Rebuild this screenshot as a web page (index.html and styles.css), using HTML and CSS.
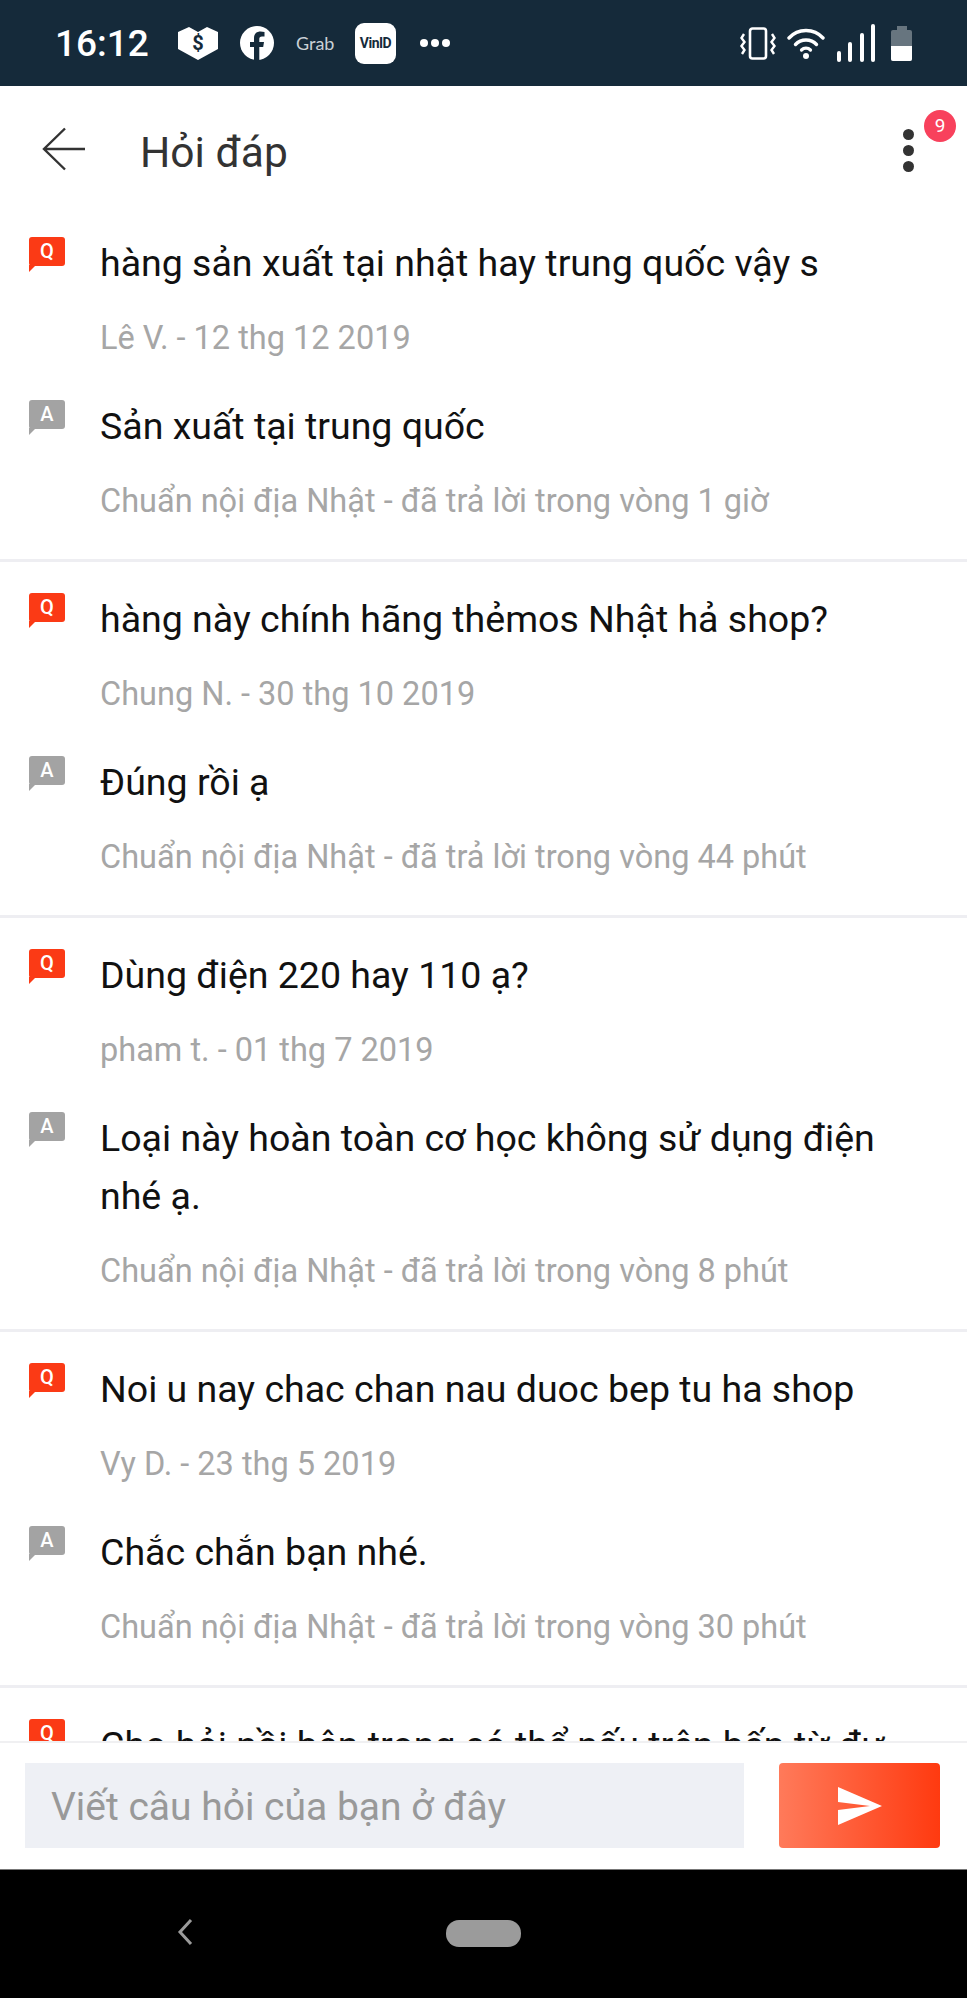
FILE: index.html
```html
<!DOCTYPE html>
<html lang="vi">
<head>
    <meta charset="UTF-8">
    <meta name="viewport" content="width=device-width, initial-scale=1.0">
    <title>Hỏi đáp</title>
    <link rel="stylesheet" href="styles.css">
</head>
<body>
    <div class="status-bar">
        <div class="status-left">
            <span class="clock">16:12</span>
            <svg class="ic-shield" viewBox="0 0 40 33"><path d="M0 5 L11 0 L20 5 L29 0 L40 5 V22 L20 33 L0 22Z" fill="#fff"/><text x="20" y="23" text-anchor="middle" class="ic-dollar">$</text></svg>
            <svg class="ic-fb" viewBox="0 0 34 34"><circle cx="17" cy="17" r="17" fill="#fff"/><path d="M14 34 V21 H10 V16 H14 V12 C14 7.500 17 5.500 20.500 5.500 L24.500 6 V10.500 H22 C20 10.500 19.300 11.500 19.300 13 V16 H24 L23.200 21 H19.300 V34Z" fill="#152a3a"/></svg>
            <span class="grab">Grab</span>
            <span class="vinid">VinID</span>
            <span class="more-dots"><i></i><i></i><i></i></span>
        </div>
        <div class="status-right">
            <svg class="ic-vibrate" viewBox="0 0 36 33"><rect x="10" y="1.500" width="16" height="30" rx="2.500" fill="none" stroke="#fff" stroke-width="2.600"/><path d="M4 7 L1.500 11 L4.500 15 L1.500 19 L4.500 23 L2 27 M32 7 L34.500 11 L31.500 15 L34.500 19 L31.500 23 L34 27" fill="none" stroke="#fff" stroke-width="2.400"/></svg>
            <svg class="ic-wifi" viewBox="0 0 38 32"><path d="M2 11 C11 1 27 1 36 11" fill="none" stroke="#fff" stroke-width="3.400" stroke-linecap="round"/><path d="M8.500 17.500 C14 11.500 24 11.500 29.500 17.500" fill="none" stroke="#fff" stroke-width="3.400" stroke-linecap="round"/><path d="M14.500 23 C17 20.500 21 20.500 23.500 23" fill="none" stroke="#fff" stroke-width="3.200" stroke-linecap="round"/><circle cx="19" cy="29" r="3" fill="#fff"/></svg>
            <span class="signal"><i class="s1"></i><i class="s2"></i><i class="s3"></i><i class="s4"></i></span>
            <span class="battery"><span class="battery-cap"></span><span class="battery-body"><span class="battery-level"></span></span></span>
        </div>
    </div>

    <div class="app-bar">
        <svg class="ic-back" viewBox="0 0 44 44"><path d="M43 22 H2 M23 1.500 L2 22 L23 42.500" fill="none" stroke="#333" stroke-width="2.400"/></svg>
        <span class="app-title">Hỏi đáp</span>
        <div class="menu">
            <span class="menu-dots"><i></i><i></i><i></i></span>
            <span class="menu-badge">9</span>
        </div>
    </div>

    <div class="qa-list">
        <div class="qa-item">
            <div class="qa-row"><span class="tag tag-q"><span class="tag-box">Q</span></span><p class="qa-text">hàng sản xuất tại nhật hay trung quốc vậy s</p></div>
            <p class="qa-meta">Lê V. - 12 thg 12 2019</p>
            <div class="qa-row qa-answer"><span class="tag tag-a"><span class="tag-box">A</span></span><p class="qa-text">Sản xuất tại trung quốc</p></div>
            <p class="qa-meta">Chuẩn nội địa Nhật - đã trả lời trong vòng 1 giờ</p>
        </div>
        <div class="qa-item">
            <div class="qa-row"><span class="tag tag-q"><span class="tag-box">Q</span></span><p class="qa-text">hàng này chính hãng thẻmos Nhật hả shop?</p></div>
            <p class="qa-meta">Chung N. - 30 thg 10 2019</p>
            <div class="qa-row qa-answer"><span class="tag tag-a"><span class="tag-box">A</span></span><p class="qa-text">Đúng rồi ạ</p></div>
            <p class="qa-meta">Chuẩn nội địa Nhật - đã trả lời trong vòng 44 phút</p>
        </div>
        <div class="qa-item">
            <div class="qa-row"><span class="tag tag-q"><span class="tag-box">Q</span></span><p class="qa-text">Dùng điện 220 hay 110 ạ?</p></div>
            <p class="qa-meta">pham t. - 01 thg 7 2019</p>
            <div class="qa-row qa-answer"><span class="tag tag-a"><span class="tag-box">A</span></span><p class="qa-text">Loại này hoàn toàn cơ học không sử dụng điện nhé ạ.</p></div>
            <p class="qa-meta">Chuẩn nội địa Nhật - đã trả lời trong vòng 8 phút</p>
        </div>
        <div class="qa-item">
            <div class="qa-row"><span class="tag tag-q"><span class="tag-box">Q</span></span><p class="qa-text">Noi u nay chac chan nau duoc bep tu ha shop</p></div>
            <p class="qa-meta">Vy D. - 23 thg 5 2019</p>
            <div class="qa-row qa-answer"><span class="tag tag-a"><span class="tag-box">A</span></span><p class="qa-text">Chắc chắn bạn nhé.</p></div>
            <p class="qa-meta">Chuẩn nội địa Nhật - đã trả lời trong vòng 30 phút</p>
        </div>
        <div class="qa-item">
            <div class="qa-row"><span class="tag tag-q"><span class="tag-box">Q</span></span><p class="qa-text qa-clip">Cho hỏi nồi bên trong có thể nấu trên bếp từ được không ạ</p></div>
        </div>
    </div>

    <div class="ask-bar">
        <div class="ask-input">Viết câu hỏi của bạn ở đây</div>
        <div class="ask-send">
            <svg class="ic-send" viewBox="0 0 44 38"><path d="M0 0 L44 19 L0 38 V23 L32 19 L0 15Z" fill="#fff"/></svg>
        </div>
    </div>

    <div class="nav-bar">
        <svg class="nav-back" viewBox="0 0 18 28"><path d="M15 2 L4 14 L15 26" fill="none" stroke="#9b9b9b" stroke-width="3"/></svg>
        <span class="nav-home"></span>
    </div>
</body>
</html>
```

FILE: styles.css
```css
* {
    box-sizing: border-box;
}

html, body {
    height: 100%;
}

body {
    margin: 0;
    display: flex;
    flex-direction: column;
    overflow: hidden;
    font-family: 'Roboto', 'Liberation Sans', sans-serif;
    background-color: #fff;
    color: #111;
}

p {
    margin: 0;
}

/* Barra de estado */
.status-bar {
    flex: 0 0 86px;
    display: flex;
    justify-content: space-between;
    align-items: center;
    padding: 0 55px;
    background-color: #152a3a;
    color: #fff;
}

.status-left, .status-right {
    display: flex;
    align-items: center;
}

.clock {
    font-size: 37px;
    font-weight: 500;
    width: 123px;
}

.ic-shield {
    width: 40px;
    height: 33px;
    margin-right: 22px;
}

.ic-dollar {
    font: 700 20px 'Roboto', sans-serif;
    fill: #152a3a;
}

.ic-fb {
    width: 34px;
    height: 34px;
    margin-right: 22px;
}

.grab {
    width: 40px;
    margin-right: 19px;
    font-family: 'Lato', sans-serif;
    font-size: 18px;
    color: #c9d0d5;
}

.vinid {
    width: 41px;
    height: 41px;
    margin-right: 24px;
    border-radius: 9px;
    background-color: #fff;
    color: #152a3a;
    font-size: 14px;
    font-weight: 700;
    line-height: 41px;
    text-align: center;
    letter-spacing: -0.5px;
}

.more-dots {
    display: flex;
    gap: 3px;
}

.more-dots i {
    width: 8px;
    height: 8px;
    border-radius: 50%;
    background-color: #fff;
}

.ic-vibrate {
    width: 36px;
    height: 33px;
    margin-right: 11px;
}

.ic-wifi {
    width: 38px;
    height: 32px;
    margin-right: 12px;
}

.signal {
    display: flex;
    align-items: flex-end;
    gap: 7.500px;
    height: 38px;
    margin-right: 16px;
}

.signal i {
    width: 4px;
    border-radius: 2px;
    background-color: #fff;
}

.s1 { height: 11px; }
.s2 { height: 20px; }
.s3 { height: 29px; }
.s4 { height: 38px; }

.battery {
    display: flex;
    flex-direction: column;
    align-items: center;
    width: 21px;
}

.battery-cap {
    width: 10px;
    height: 4px;
    background-color: #67757f;
}

.battery-body {
    display: flex;
    align-items: flex-end;
    width: 21px;
    height: 31px;
    border-radius: 2px;
    background-color: #67757f;
}

.battery-level {
    width: 100%;
    height: 15px;
    border-radius: 0 0 2px 2px;
    background-color: #fff;
}

/* Barra de la app */
.app-bar {
    flex: 0 0 132px;
    display: flex;
    align-items: center;
    padding: 0 53px 0 42px;
}

.ic-back {
    width: 44px;
    height: 44px;
    margin-right: 54px;
    margin-bottom: 6px;
}

.app-title {
    flex: 1;
    font-size: 42.500px;
    color: #333;
}

.menu {
    position: relative;
    margin-bottom: 3px;
}

.menu-dots {
    display: flex;
    flex-direction: column;
    gap: 5px;
}

.menu-dots i {
    width: 11px;
    height: 11px;
    border-radius: 50%;
    background-color: #333;
}

.menu-badge {
    position: absolute;
    top: -19px;
    left: 21px;
    width: 32px;
    height: 32px;
    border-radius: 50%;
    background-color: #f8415c;
    color: #fff;
    font-size: 19px;
    line-height: 32px;
    text-align: center;
}

/* Lista de preguntas */
.qa-list {
    flex: 1;
    min-height: 0;
    overflow: hidden;
}

.qa-item {
    padding: 16px 28px 40px 29px;
    border-bottom: 3px solid #eeeef2;
}

.qa-item + .qa-item {
    padding-top: 28px;
}

.qa-row {
    display: flex;
}

.qa-answer {
    margin-top: 41px;
}

.tag {
    flex: 0 0 71px;
    padding-top: 3px;
}

.tag-box {
    position: relative;
    display: block;
    width: 36px;
    height: 29px;
    border-radius: 3px;
    color: #fff;
    font-size: 20px;
    font-weight: 500;
    line-height: 29px;
    text-align: center;
}

.tag-box::after {
    content: '';
    position: absolute;
    left: 0;
    top: 28px;
    border-right: 7px solid transparent;
}

.tag-q .tag-box { background-color: #fb3a15; }
.tag-q .tag-box::after { border-top: 7px solid #fb3a15; }
.tag-a .tag-box { background-color: #a3a3a3; }
.tag-a .tag-box::after { border-top: 7px solid #a3a3a3; }

.qa-text {
    flex: 1;
    min-width: 0;
    font-size: 37.500px;
    line-height: 58px;
    color: #111;
}

.qa-clip {
    margin-right: 16px;
    white-space: nowrap;
    overflow: hidden;
    text-overflow: ellipsis;
}

.qa-meta {
    margin-top: 28px;
    margin-left: 71px;
    font-size: 32.500px;
    line-height: 36px;
    color: #a6a6a6;
}

/* Caja de pregunta */
.ask-bar {
    flex: 0 0 128px;
    display: flex;
    justify-content: space-between;
    padding: 20px 27px 21px 25px;
    border-top: 2px solid #f0f0f2;
    background-color: #fff;
}

.ask-input {
    width: 719px;
    padding: 3px 0 0 26px;
    background-color: #eef0f5;
    color: #999;
    font-size: 39px;
    line-height: 82px;
}

.ask-send {
    display: flex;
    justify-content: center;
    align-items: center;
    width: 161px;
    border-radius: 4px;
    background: linear-gradient(to right, #ff7a5a, #ff3a10);
}

.ic-send {
    width: 44px;
    height: 38px;
}

/* Barra de navegacion */
.nav-bar {
    flex: 0 0 129px;
    position: relative;
    border-top: 1px solid #777;
    background-color: #000;
}

.nav-back {
    position: absolute;
    left: 176px;
    top: 48px;
    width: 18px;
    height: 28px;
}

.nav-home {
    position: absolute;
    left: 446px;
    top: 50px;
    width: 75px;
    height: 27px;
    border-radius: 13px;
    background-color: #9b9b9b;
}
```
